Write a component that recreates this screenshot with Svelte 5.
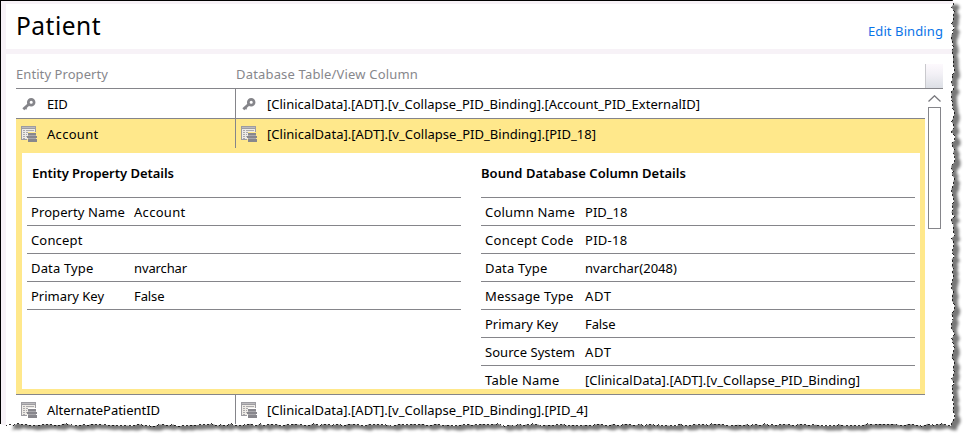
<script>
  const rows = [
    { icon: 'key', name: 'EID', nw: 20.5, column: '[ClinicalData].[ADT].[v_Collapse_PID_Binding].[Account_PID_ExternalID]', cw: 433 },
    { icon: 'table', name: 'Account', nw: 51.5, column: '[ClinicalData].[ADT].[v_Collapse_PID_Binding].[PID_18]', cw: 329, open: true },
    { icon: 'table', name: 'AlternatePatientID', nw: 113, column: '[ClinicalData].[ADT].[v_Collapse_PID_Binding].[PID_4]', cw: 321 }
  ];
  const entity = [
    ['Property Name', 94, 'Account', 51.5],
    ['Concept', 51.5, '', 0],
    ['Data Type', 62.5, 'nvarchar', 53],
    ['Primary Key', 73, 'False', 30.5]
  ];
  const bound = [
    ['Column Name', 90, 'PID_18', 42.5],
    ['Concept Code', 88.5, 'PID-18', 42.5],
    ['Data Type', 62.5, 'nvarchar(2048)', 92],
    ['Message Type', 88.5, 'ADT', 26.5],
    ['Primary Key', 73, 'False', 30.5],
    ['Source System', 90, 'ADT', 26.5],
    ['Table Name', 74.5, '[ClinicalData].[ADT].[v_Collapse_PID_Binding]', 275]
  ];

  // Adjusts tracking so a label occupies its designed width.
  function fit(node, width) {
    const natural = node.getBoundingClientRect().width;
    const count = node.textContent.length;
    if (width && count) node.style.letterSpacing = `${(width - natural) / count}px`;
  }

  // Torn-paper border along the right and bottom sides.
  let seed = 17;
  const rand = () => {
    seed = (seed * 16807) % 2147483647;
    return seed / 2147483647;
  };
  const right = [];
  for (let y = 0; y < 423; y += 2 + rand() * 3) right.push([951.2 + rand() * 3.8, y]);
  right[0] = [952, 0];
  const bottom = [];
  for (let x = 951; x > 2; x -= 2 + rand() * 4) bottom.push([x, 423.7 + rand() * 2.4]);
  const torn = [...right, ...bottom].map((p) => p.map((n) => n.toFixed(1)).join(',')).join(' L');
  const page = `M0,0 L${torn} L0,424 Z`;
</script>

{#snippet icon(kind)}
  {#if kind === 'key'}
    <svg class="icon" width="16" height="16" viewBox="0 0 16 16">
      <path d="M2.3 13.2 8.4 7.8" stroke="#85858a" stroke-width="2.8" fill="none" />
      <path d="M4.1 11.8 5.6 13.2" stroke="#85858a" stroke-width="1.5" />
      <circle cx="10.2" cy="6.2" r="2.9" stroke="#85858a" stroke-width="2.7" fill="none" />
    </svg>
  {:else}
    <svg class="icon" width="16" height="16" viewBox="0 0 16 16" shape-rendering="crispEdges">
      <path fill="#9d9ca1" d="M0 0h15v3H0zM0 3h1v11H0zM14 3h1v3h-1zM1 13h5v1H1z" />
      <path fill="#bdbbbe" d="M1 1h13v1H1z" />
      <path fill="#eeebe6" d="M1 3h13v3H7v7H1z" />
      <path fill="#aaa9ac" d="M2 4h2v1H2zM5 4h8v1H5zM2 6h2v1H2zM5 6h2v1H5zM2 8h2v1H2zM5 8h1v1H5zM2 10h2v1H2zM5 10h1v1H5zM2 12h2v1H2z" />
      <path fill="#88878d" d="M7 7h8v2H7zM6 10h10v2H6zM7 13h9v3H7z" />
      <path fill="#aaa9ad" d="M7 9h8v1H7zM7 12h8v1H7z" />
    </svg>
  {/if}
{/snippet}

{#snippet details(title, tw, items, side)}
  <section class="details {side}">
    <h2><span use:fit={tw}>{title}</span></h2>
    <dl>
      {#each items as [label, lw, value, vw]}
        <div class="pair">
          <dt><span use:fit={lw}>{label}</span></dt>
          <dd><span use:fit={vw}>{value}</span></dd>
        </div>
      {/each}
    </dl>
  </section>
{/snippet}

<main>
  <svg class="paper" width="964" height="435" viewBox="0 0 964 435" aria-hidden="true">
    <defs>
      <filter id="soft" x="-5%" y="-5%" width="110%" height="110%"><feGaussianBlur stdDeviation="1.5" /></filter>
      <clipPath id="sheet"><path d={page} /></clipPath>
    </defs>
    <path d="M8,6 L{torn} L8,424 Z" fill="#000" opacity=".53" transform="translate(5.5 4.5)" filter="url(#soft)" />
    <path d={page} fill="#fff" />
    <g clip-path="url(#sheet)" fill="#f7f2f7">
      <path d="M1 1h958v3H1zM1 49h958v5H1zM1 1h5v425H1z" />
    </g>
    <path d="M0 0h952v1H1v423H0z" fill="#000" />
    <path d="M{torn}" fill="none" stroke="#000" stroke-width=".8" stroke-dasharray="2 2.2" shape-rendering="crispEdges" />
  </svg>

  <header>
    <h1><span use:fit={85}>Patient</span></h1>
    <a href="#edit"><span use:fit={75}>Edit Binding</span></a>
  </header>

  <div class="head">
    <div class="first"><span use:fit={92}>Entity Property</span></div>
    <div class="second"><span use:fit={182}>Database Table/View Column</span></div>
    <div class="corner"></div>
  </div>

  <div class="body">
    <div class="grid">
      {#each rows as row}
        <div class="item" class:open={row.open}>
          <div class="row">
            <div class="cell">{@render icon(row.icon)}<span use:fit={row.nw}>{row.name}</span></div>
            <div class="cell bound">{@render icon(row.icon)}<span use:fit={row.cw}>{row.column}</span></div>
          </div>
          {#if row.open}
            <div class="panel">
              {@render details('Entity Property Details', 142, entity, 'left')}
              {@render details('Bound Database Column Details', 205, bound, 'right')}
            </div>
          {/if}
        </div>
      {/each}
    </div>
    <div class="scroll">
      <svg width="13" height="7" viewBox="0 0 13 7"><path d="M.5 6.5 6.5 .8 12.5 6.5" fill="none" stroke="#77777c" stroke-width="1.3" /></svg>
      <div class="thumb"></div>
    </div>
  </div>
</main>

<style>
  :global(body) { margin: 0; background: #fff; }
  main {
    position: relative;
    width: 964px;
    height: 435px;
    overflow: hidden;
    box-sizing: border-box;
    padding-left: 16px;
    font: 13px/18px "Noto Sans", "Open Sans", sans-serif;
    color: #000;
  }
  .paper { position: absolute; left: 0; top: 0; z-index: -1; }
  span { white-space: pre; }
  header {
    display: flex;
    justify-content: space-between;
    width: 927px;
    height: 54px;
  }
  h1 { margin: 9px 0 0; font-size: 24.5px; line-height: 34px; font-weight: 400; }
  header a { margin-top: 22px; color: #0a74e8; text-decoration: none; }
  .head {
    display: flex;
    box-sizing: border-box;
    width: 927px;
    height: 35px;
    padding-top: 10px;
    border-bottom: 1px solid #85858a;
    color: #87878c;
  }
  .first { width: 220px; padding-top: 1px; }
  .second { flex: 1; padding-top: 1px; }
  .corner {
    width: 17px;
    border-left: 1px solid #c9c9cd;
    background: linear-gradient(#fdf9fd, #f3f1f6 40%, #dcdfe5);
  }
  .body { display: flex; width: 927px; height: 335px; overflow: hidden; }
  .grid { width: 909px; }
  .item { border-bottom: 1px solid #85858a; }
  .item:last-child { border: 0; }
  .open { background: #ffe88b; height: 275px; }
  .row { display: flex; height: 29px; }
  .cell { display: flex; align-items: center; width: 219px; box-sizing: border-box; padding-left: 5px; }
  .cell.bound { flex: 1; border-left: 1px solid #85858a; }
  .icon { margin-right: 10px; flex: none; }
  .panel {
    display: flex;
    justify-content: space-between;
    box-sizing: border-box;
    width: 898px;
    height: 236px;
    margin: 5px 0 0 6px;
    padding: 0 5px;
    overflow: hidden;
    background: #fff;
  }
  .details { width: 434px; }
  h2 { margin: 0; height: 33px; padding-top: 11px; font-size: 13px; line-height: 18px; font-weight: 600; }
  .left h2 { padding-left: 5px; }
  dl { margin: 0; border-top: 1px solid #85858a; }
  .pair { display: flex; height: 27px; line-height: 28px; border-bottom: 1px solid #85858a; }
  dt { width: 103px; padding-left: 4px; box-sizing: border-box; }
  .right dt { width: 104px; }
  .left dt { width: 107px; }
  dd { margin: 0; }
  .scroll { width: 18px; padding: 6px 0 0 3px; box-sizing: border-box; display: flex; flex-direction: column; }
  .thumb { box-sizing: border-box; width: 13px; height: 122px; margin-top: 5px; border: 1px solid #85858a; background: #fff; }
</style>
